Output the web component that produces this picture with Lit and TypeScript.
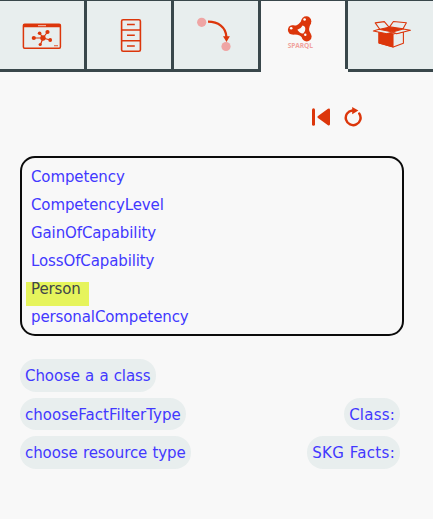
import { LitElement, html, css, svg } from "lit";
import { customElement, property, state } from "lit/decorators.js";
import { classMap } from "lit/directives/class-map.js";

const icons: Record<string, unknown> = {
  graph: svg`<g fill="none" stroke="#dc360b">
    <rect x="23.4" y="24.2" width="37" height="24" rx="1.2" stroke-width="1.5"/>
    <path d="M23.4 25.7H60.4" stroke-width="3"/>
    <path d="M38 25.7H46" stroke="#f7c5b8" stroke-width="1"/>
    <path d="M34 38H43L40 33.5M43 38L47.5 32M43 38L50 40M43 38L40.5 44.5" stroke-width="1.2"/>
    <path d="M54 45.7H58" stroke-width="1.2" opacity=".7"/></g>
    <g fill="#dc360b"><circle cx="43" cy="38" r="2.7"/><circle cx="33.8" cy="38" r="2.1"/><circle cx="39.6" cy="33.2" r="1.8"/><circle cx="47.5" cy="32" r="2.1"/><circle cx="50.2" cy="40" r="1.9"/><circle cx="40.2" cy="44.5" r="1.6"/></g>`,
  cabinet: svg`<g fill="none" stroke="#dc360b" stroke-width="1.6">
    <rect x="34.6" y="19.8" width="18.8" height="31.4" rx="1.5"/>
    <path d="M34.5 30H53.5M34.5 40.7H53.5"/><path d="M40 24.4H47.8M40 35.3H47.8M40 46.1H47.8" stroke-width="1.5"/></g>`,
  arrow: svg`<circle cx="27.7" cy="22.3" r="4.6" fill="#efa5a4"/><circle cx="52" cy="46.5" r="4.6" fill="#efa5a4"/>
    <path d="M34 21.6C44 21.6 52 27 52.4 37" fill="none" stroke="#dc360b" stroke-width="2.3"/>
    <path d="M49 36.2H55.9L52.5 42Z" fill="#dc360b"/>`,
  sparql: svg`<path d="M31.7 25.4Q37.5 26.8 41 19.5L50.2 23Q46.3 29.5 49.6 33.5L41.5 38.5Q39.5 34 31.7 34.6Z" fill="#dc360b"/>
    <g fill="#dc360b"><circle cx="31.6" cy="29.9" r="4.7"/><circle cx="45.3" cy="21.2" r="5"/><circle cx="45.7" cy="36.6" r="4.9"/></g>
    <path d="M36.3 29.8Q40.2 28.8 41.6 25.6Q44.5 26.2 44.3 29Q44.6 31.6 42.3 33.4Q39.2 34 36.3 29.8Z" fill="#f8f8f8"/>
    <g fill="#fff"><circle cx="30.2" cy="28.3" r="1.3"/><circle cx="43.6" cy="19.5" r="1.3"/><circle cx="44.3" cy="34.7" r="1.2"/></g>
    <text x="26.7" y="47.6" textLength="25.2" lengthAdjust="spacingAndGlyphs" font-family="Open Sans, sans-serif" font-weight="700" font-size="7.6" fill="#f0a39e">SPARQL</text>`,
  box: svg`<g fill="none" stroke="#dc360b" stroke-width="1.1" stroke-linejoin="round">
    <path d="M31 32L45 34L55.4 32V43.3L45.3 47L31 43Z" fill="#e9eeee"/>
    <path d="M31 32L45 34V47L31 43Z" fill="#dc360b"/>
    <path d="M31.5 29.3L41.3 26.8L55.4 28.8L44.6 32Z" fill="#dc360b"/>
    <path d="M27.2 22.9L36.3 21.6L41 27.2L31.8 29.3Z" fill="#e9eeee"/>
    <path d="M41.6 26.9L45.4 21.5L58.4 22.7L55 28.7Z" fill="#e9eeee"/>
    <path d="M31 29.3L25.4 31L38.8 33.7L44.6 32Z" fill="#e9eeee"/>
    <path d="M44.6 32L55.2 29L62.4 30.3L48.6 33.7Z" fill="#e9eeee"/></g>`,
};

@customElement("tab-item")
class TabItem extends LitElement {
  @property() icon = "";
  @property({ type: Boolean, reflect: true }) active = false;
  static styles = css`
    :host { display: block; flex: 0 0 87px; height: 72px; box-sizing: border-box; background: #e8eeee;
      border-right: 3px solid #39474b; border-bottom: 3px solid #39474b; border-top: 1px solid #39474b; }
    :host([active]) { background: #f8f8f8; border-bottom: 0; height: 69px; }
    :host(:last-of-type) { border-right: 0; }
    svg { display: block; width: 84px; height: 67px; }
  `;
  render() {
    return html`<svg viewBox="0 1 84 67">${icons[this.icon]}</svg>`;
  }
}

interface Pill { label: string; spacing: number; }

@customElement("app-root")
class AppRoot extends LitElement {
  @state() private selected = "Person";
  private tabs = ["graph", "cabinet", "arrow", "sparql", "box"];
  private classes = ["Competency", "CompetencyLevel", "GainOfCapability", "LossOfCapability", "Person", "personalCompetency"];
  private filters: Pill[][] = [
    [{ label: "Choose a a class", spacing: -0.08 }],
    [{ label: "chooseFactFilterType", spacing: 0.02 }, { label: "Class:", spacing: 0.22 }],
    [{ label: "choose resource type", spacing: -0.07 }, { label: "SKG Facts:", spacing: 0.3 }],
  ];

  static styles = css`
    :host { display: block; width: 100%; height: 519px; overflow: hidden; background: #f8f8f8; color: #4238ff;
      font: 15px/18px "DejaVu Sans", sans-serif; letter-spacing: -0.11px; box-sizing: border-box; }
    nav { display: flex; height: 72px; overflow: hidden; }
    .tools { display: flex; justify-content: flex-end; gap: 11px; padding: 35px 71px 0 0; }
    .tools svg { display: block; width: 20px; height: 20px; }
    .list { box-sizing: border-box; width: 384px; height: 180px; margin: 29px 0 0 20px; padding: 12px 4px 0;
      border: 2px solid #0b0b0b; border-radius: 15px; }
    .item { display: block; box-sizing: border-box; width: max-content; height: 24px; margin-bottom: 4px;
      padding: 0 5px; line-height: 14px; white-space: nowrap; cursor: pointer; }
    .selected { background: #e6f45c; color: #40464a; padding-right: 8px; }
    .filters { display: grid; gap: 6px; width: 380px; margin: 23px 0 0 20px; grid-template-rows: 33px 32px 33px; }
    .row { display: flex; justify-content: space-between; }
    .pill { box-sizing: border-box; padding: 1px 5px 0; line-height: 33px; border-radius: 16px;
      background: #e8eeee; white-space: nowrap; word-spacing: 0.5px; height: 100%; }
  `;

  render() {
    return html`
      <nav>${this.tabs.map((t) => html`<tab-item icon=${t} ?active=${t === "sparql"}></tab-item>`)}</nav>
      <div class="tools">
        <svg viewBox="0 0 20 20"><path d="M2.5 2.7V17.3" stroke="#dc360b" stroke-width="3" stroke-linecap="round"/><path d="M7 9L17 1.8Q19 1 19 3V17Q19 19 17 18.2L7 11.1Q5.6 10 7 9Z" fill="#dc360b"/></svg>
        <svg viewBox="0 0 20 20"><path d="M17.3 6.6A7.4 7.4 0 1 1 10.3 3.4" fill="none" stroke="#dc360b" stroke-width="2.5" stroke-linecap="round"/><path d="M10.2 0L16.4 3.5L10.2 7.2Z" fill="#dc360b"/></svg>
      </div>
      <div class="list">${this.classes.map((c) => html`<span
        class=${classMap({ item: true, selected: c === this.selected })}
        @click=${() => (this.selected = c)}>${c}</span>`)}</div>
      <div class="filters">${this.filters.map((row) => html`<div class="row">${row.map((p) => html`<span
        class="pill" style="letter-spacing:${p.spacing}px">${p.label}</span>`)}</div>`)}</div>`;
  }
}
